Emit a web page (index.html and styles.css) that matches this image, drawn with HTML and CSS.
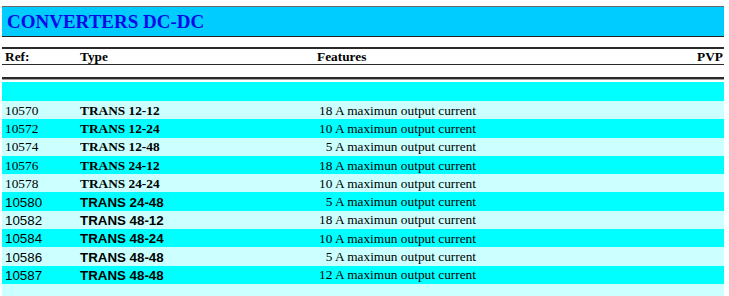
FILE: index.html
```html
<!DOCTYPE html>
<html>
<head>
<meta charset="utf-8">
<link rel="stylesheet" href="styles.css">
</head>
<body>
<div class="page">
  <div class="title">CONVERTERS DC-DC</div>
  <div class="head">
    <span class="c-ref">Ref:</span>
    <span class="c-type">Type</span>
    <span class="c-feat-h">Features</span>
    <span class="c-pvp">PVP</span>
  </div>
  <div class="sep"></div>
  <div class="band"></div>
  <div class="rows">
    <div class="row light"><span class="c-ref">10570</span><span class="c-type">TRANS 12-12</span><span class="c-feat">18 A maximun output current</span></div>
    <div class="row dark"><span class="c-ref">10572</span><span class="c-type">TRANS 12-24</span><span class="c-feat">10 A maximun output current</span></div>
    <div class="row light"><span class="c-ref">10574</span><span class="c-type">TRANS 12-48</span><span class="c-feat">5 A maximun output current</span></div>
    <div class="row dark"><span class="c-ref">10576</span><span class="c-type">TRANS 24-12</span><span class="c-feat">18 A maximun output current</span></div>
    <div class="row light"><span class="c-ref">10578</span><span class="c-type">TRANS 24-24</span><span class="c-feat">10 A maximun output current</span></div>
    <div class="row dark sans"><span class="c-ref">10580</span><span class="c-type">TRANS 24-48</span><span class="c-feat">5 A maximun output current</span></div>
    <div class="row light sans"><span class="c-ref">10582</span><span class="c-type">TRANS 48-12</span><span class="c-feat">18 A maximun output current</span></div>
    <div class="row dark sans"><span class="c-ref">10584</span><span class="c-type">TRANS 48-24</span><span class="c-feat">10 A maximun output current</span></div>
    <div class="row light sans"><span class="c-ref">10586</span><span class="c-type">TRANS 48-48</span><span class="c-feat">5 A maximun output current</span></div>
    <div class="row dark sans"><span class="c-ref">10587</span><span class="c-type">TRANS 48-48</span><span class="c-feat">12 A maximun output current</span></div>
    <div class="row light tail"></div>
  </div>
</div>
</body>
</html>
```

FILE: styles.css
```css
html, body {
  margin: 0;
  padding: 0;
  background: #ffffff;
}
body {
  font-family: "Liberation Serif", "Times New Roman", serif;
  font-size: 13.33px;
  color: #000000;
}
.page {
  width: 722px;
  margin-left: 2px;
  padding-top: 6px;
}
.title {
  height: 28px;
  border-top: 1px solid #6a6a6a;
  border-bottom: 1px solid #222222;
  background: #00ccff;
  color: #0a0ae6;
  font-weight: bold;
  font-size: 19px;
  line-height: 28px;
  padding-left: 5px;
  padding-top: 1px;
  box-sizing: content-box;
}
.head {
  margin-top: 10px;
  height: 15px;
  border-top: 2px solid #2a2a2a;
  border-bottom: 1px solid #2a2a2a;
  display: flex;
  align-items: center;
  font-weight: bold;
  font-size: 13.33px;
  line-height: 15px;
}
.sep {
  margin-top: 12px;
  height: 0;
  border-top: 2px solid #2a2a2a;
  border-bottom: 1px solid #a0a0a0;
}
.band {
  margin-top: 2px;
  height: 19px;
  background: #00ffff;
}
.rows {
  display: flex;
  flex-direction: column;
}
.row {
  display: flex;
  align-items: center;
  height: 18.3px;
  font-family: "Liberation Serif", "Times New Roman", serif;
  font-size: 13.33px;
  padding-top: 1px;
  box-sizing: border-box;
}
.row.light { background: #ccffff; }
.row.dark { background: #00ffff; }
.row.tail { height: 20px; }
.c-ref {
  width: 75px;
  padding-left: 3px;
}
.c-type {
  width: 232px;
  font-weight: bold;
}
.c-feat-h {
  padding-left: 5px;
  flex: 1;
}
.c-feat {
  width: 164px;
  text-align: right;
}
.c-pvp {
  padding-right: 1px;
}
.row.sans .c-ref,
.row.sans .c-type {
  font-family: "Liberation Sans", Arial, sans-serif;
}
```
